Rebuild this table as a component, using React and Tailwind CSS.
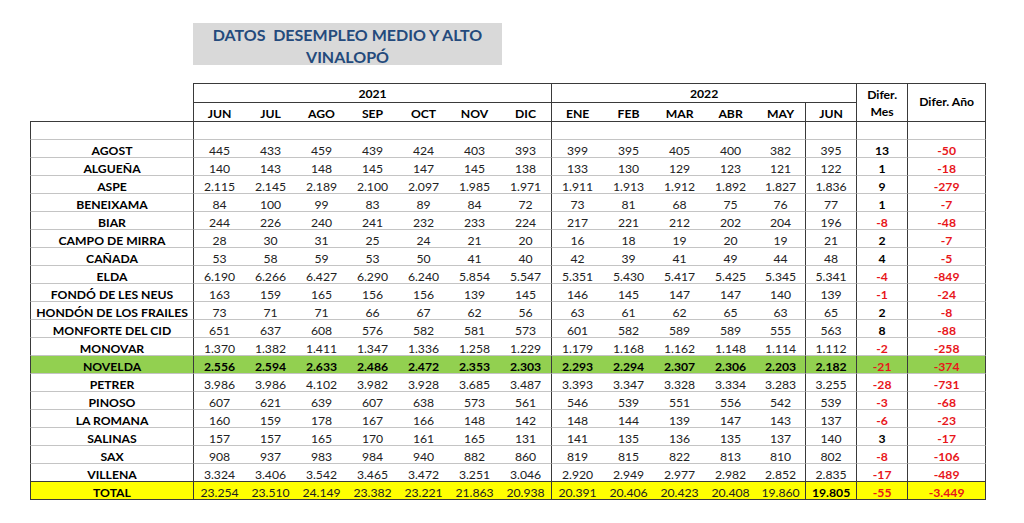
const rows = [
  ["AGOST", ["445", "433", "459", "439", "424", "403", "393"], ["399", "395", "405", "400", "382", "395"], "13", "-50"],
  ["ALGUEÑA", ["140", "143", "148", "145", "147", "145", "138"], ["133", "130", "129", "123", "121", "122"], "1", "-18"],
  ["ASPE", ["2.115", "2.145", "2.189", "2.100", "2.097", "1.985", "1.971"], ["1.911", "1.913", "1.912", "1.892", "1.827", "1.836"], "9", "-279"],
  ["BENEIXAMA", ["84", "100", "99", "83", "89", "84", "72"], ["73", "81", "68", "75", "76", "77"], "1", "-7"],
  ["BIAR", ["244", "226", "240", "241", "232", "233", "224"], ["217", "221", "212", "202", "204", "196"], "-8", "-48"],
  ["CAMPO DE MIRRA", ["28", "30", "31", "25", "24", "21", "20"], ["16", "18", "19", "20", "19", "21"], "2", "-7"],
  ["CAÑADA", ["53", "58", "59", "53", "50", "41", "40"], ["42", "39", "41", "49", "44", "48"], "4", "-5"],
  ["ELDA", ["6.190", "6.266", "6.427", "6.290", "6.240", "5.854", "5.547"], ["5.351", "5.430", "5.417", "5.425", "5.345", "5.341"], "-4", "-849"],
  ["FONDÓ DE LES NEUS", ["163", "159", "165", "156", "156", "139", "145"], ["146", "145", "147", "147", "140", "139"], "-1", "-24"],
  ["HONDÓN DE LOS FRAILES", ["73", "71", "71", "66", "67", "62", "56"], ["63", "61", "62", "65", "63", "65"], "2", "-8"],
  ["MONFORTE DEL CID", ["651", "637", "608", "576", "582", "581", "573"], ["601", "582", "589", "589", "555", "563"], "8", "-88"],
  ["MONOVAR", ["1.370", "1.382", "1.411", "1.347", "1.336", "1.258", "1.229"], ["1.179", "1.168", "1.162", "1.148", "1.114", "1.112"], "-2", "-258"],
  ["NOVELDA", ["2.556", "2.594", "2.633", "2.486", "2.472", "2.353", "2.303"], ["2.293", "2.294", "2.307", "2.306", "2.203", "2.182"], "-21", "-374"],
  ["PETRER", ["3.986", "3.986", "4.102", "3.982", "3.928", "3.685", "3.487"], ["3.393", "3.347", "3.328", "3.334", "3.283", "3.255"], "-28", "-731"],
  ["PINOSO", ["607", "621", "639", "607", "638", "573", "561"], ["546", "539", "551", "556", "542", "539"], "-3", "-68"],
  ["LA ROMANA", ["160", "159", "178", "167", "166", "148", "142"], ["148", "144", "139", "147", "143", "137"], "-6", "-23"],
  ["SALINAS", ["157", "157", "165", "170", "161", "165", "131"], ["141", "135", "136", "135", "137", "140"], "3", "-17"],
  ["SAX", ["908", "937", "983", "984", "940", "882", "860"], ["819", "815", "822", "813", "810", "802"], "-8", "-106"],
  ["VILLENA", ["3.324", "3.406", "3.542", "3.465", "3.472", "3.251", "3.046"], ["2.920", "2.949", "2.977", "2.982", "2.852", "2.835"], "-17", "-489"],
];

const total = ["TOTAL", ["23.254", "23.510", "24.149", "23.382", "23.221", "21.863", "20.938"], ["20.391", "20.406", "20.423", "20.408", "19.860", "19.805"], "-55", "-3.449"];

const m2021 = ["JUN", "JUL", "AGO", "SEP", "OCT", "NOV", "DIC"];
const m2022 = ["ENE", "FEB", "MAR", "ABR", "MAY", "JUN"];
const widths = [164, 51, 51, 51, 51, 51, 51, 52, 51, 51, 51, 51, 50, 51, 51, 78];

const dark = "border-[#3a3a3a]";

function DataRow({ row, kind }) {
  const [name, a, b, mes, ano] = row;
  const bold = kind === "novelda";
  const isTotal = kind === "total";
  const bg = bold ? "bg-[#92d050]" : isTotal ? "bg-[#ffff00]" : "";
  const bottom = kind === "last" || isTotal ? "border-b border-b-[#3a3a3a]" : "border-b border-b-[#c4c4c4]";
  const cell = `h-[18px] p-0 pt-[4px] leading-[12px] text-center align-middle ${bottom}`;
  const num = bold ? "font-bold text-black" : "text-[#222]";
  const mesRed = mes.startsWith("-");
  return (
    <tr className={bg}>
      <td className={`${cell} border-l border-r ${dark} font-bold text-black`}>{name}</td>
      {a.map((v, i) => (
        <td key={i} className={`${cell} ${num} ${i === 6 ? `border-r ${dark}` : ""}`}>{v}</td>
      ))}
      {b.map((v, i) => (
        <td
          key={i}
          className={`${cell} ${num} ${i >= 4 ? `border-r ${dark}` : ""} ${isTotal && i === 5 ? "font-bold text-black" : ""}`}
        >
          {v}
        </td>
      ))}
      <td className={`${cell} border-r ${dark} font-bold ${mesRed ? "text-[#e8161b]" : "text-black"}`}>{mes}</td>
      <td className={`${cell} border-r ${dark} font-bold text-[#e8161b]`}>{ano}</td>
    </tr>
  );
}

export default function App() {
  return (
    <div className="w-[1024px] h-[523px] bg-white pt-[23px] font-['Lato',sans-serif] overflow-hidden">
      <div className="ml-[193px] w-[309px] h-[42px] bg-[#d9d9d9] pt-[1px] text-center text-[16px] leading-[22px] font-bold text-[#244a7c]">
        <div className="whitespace-pre">DATOS  DESEMPLEO MEDIO Y ALTO</div>
        <div>VINALOPÓ</div>
      </div>

      <table className="mt-[18px] ml-[30px] w-[956px] table-fixed border-separate border-spacing-0 text-[12.2px] leading-none">
        <colgroup>
          {widths.map((w, i) => (
            <col key={i} style={{ width: w }} />
          ))}
        </colgroup>
        <thead>
          <tr>
            <th className={`h-[20px] p-0 pt-[2px] border-r ${dark}`}></th>
            <th colSpan={7} className={`h-[20px] p-0 pt-[2px] border-t border-b border-r ${dark} font-bold text-black`}>2021</th>
            <th colSpan={6} className={`h-[20px] p-0 pt-[2px] border-t border-b border-r ${dark} font-bold text-black`}>2022</th>
            <th rowSpan={2} className={`p-0 pt-[1px] border-t border-b border-r ${dark} font-bold text-black leading-[17px]`}>
              Difer.
              <br />
              Mes
            </th>
            <th rowSpan={2} className={`p-0 border-t border-b border-r ${dark} font-bold text-black`}>Difer. Año</th>
          </tr>
          <tr>
            <th className={`h-[19px] p-0 border-b border-r ${dark}`}></th>
            {m2021.map((m, i) => (
              <th key={m} className={`h-[19px] p-0 pt-[4px] border-b ${dark} ${i === 6 ? "border-r" : ""} font-bold text-black`}>{m}</th>
            ))}
            {m2022.map((m, i) => (
              <th key={m} className={`h-[19px] p-0 pt-[4px] border-b ${dark} ${i >= 4 ? "border-r" : ""} font-bold text-black`}>{m}</th>
            ))}
          </tr>
        </thead>
        <tbody>
          <DataRow row={["", Array(7).fill(""), Array(6).fill(""), "", ""]} kind="empty" />
          {rows.map((r, i) => (
            <DataRow
              key={r[0]}
              row={r}
              kind={r[0] === "NOVELDA" ? "novelda" : i === rows.length - 1 ? "last" : "normal"}
            />
          ))}
          <DataRow row={total} kind="total" />
        </tbody>
      </table>
    </div>
  );
}
